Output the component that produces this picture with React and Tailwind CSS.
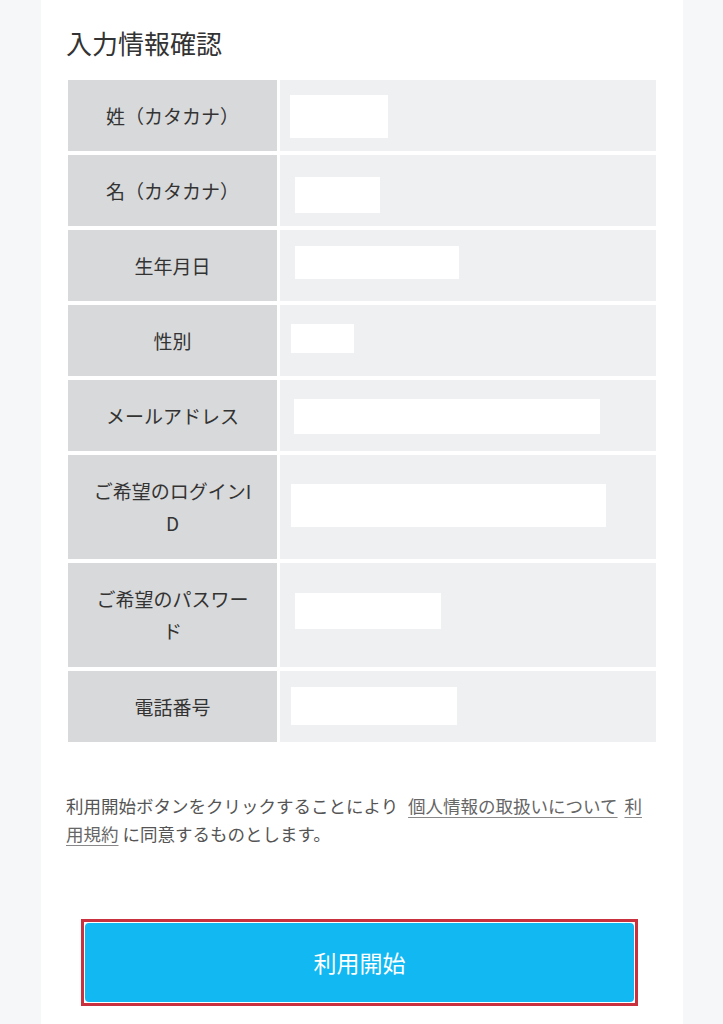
import React from "react";

const rows = [
  { label: "姓（カタカナ）", tall: false, box: "ml-[10px] mt-[15px] w-[98px] h-[43px]" },
  { label: "名（カタカナ）", tall: false, box: "ml-[15px] mt-[22px] w-[85px] h-[36px]" },
  { label: "生年月日", tall: false, box: "ml-[15px] mt-[16px] w-[164px] h-[33px]" },
  { label: "性別", tall: false, box: "ml-[11px] mt-[19px] w-[63px] h-[29px]" },
  { label: "メールアドレス", tall: false, box: "ml-[14px] mt-[19px] w-[306px] h-[35px]" },
  { label: "ご希望のログインID", tall: true, box: "ml-[11px] mt-[29px] w-[315px] h-[43px]" },
  { label: "ご希望のパスワード", tall: true, box: "ml-[15px] mt-[30px] w-[146px] h-[36px]" },
  { label: "電話番号", tall: false, box: "ml-[11px] mt-[16px] w-[166px] h-[38px]" },
];

export default function App() {
  return (
    <div
      className="w-[723px] h-[1024px] overflow-hidden bg-[#f6f7f8] pl-[41px] pr-[40px]"
      style={{ fontFamily: '"Noto Sans CJK JP", "Noto Sans", sans-serif' }}
    >
      <div className="h-full bg-white px-[25px] pt-[23px]">
        <h1 className="text-[26px] leading-[39px] text-[#333333] font-normal">入力情報確認</h1>

        <div className="mt-[18px] mx-[2px] grid grid-cols-[209px_1fr] gap-x-[3px] gap-y-[4px]">
          {rows.map((r, i) => (
            <React.Fragment key={i}>
              <div
                className={
                  (r.tall ? "h-[104px]" : "h-[71px]") +
                  " bg-[#d8d9da] flex items-center justify-center px-[22px] text-center text-[19px] leading-[32px] text-[#333333] break-all"
                }
              >
                {r.label}
              </div>
              <div className={(r.tall ? "h-[104px]" : "h-[71px]") + " bg-[#eff0f1] flex items-start"}>
                <div className={"bg-white " + r.box}></div>
              </div>
            </React.Fragment>
          ))}
        </div>

        <p className="mt-[50px] w-[590px] text-[17.5px] leading-[28px] text-[#555555]">
          利用開始ボタンをクリックすることにより{" "}
          <span className="ml-[6px] underline underline-offset-[4px] decoration-[#888888] text-[#666666]">個人情報の取扱いについて</span>{" "}
          <span className="ml-[3px] underline underline-offset-[4px] decoration-[#888888] text-[#666666]">利用規約</span>{" "}
          に同意するものとします。
        </p>

        <div className="mt-[71px] ml-[15px] w-[557px] h-[87px] border-[3px] border-[#c8313d] p-[1px] bg-white">
          <button className="w-full h-full rounded-[4px] bg-[#12b8f2] text-white text-[23px] leading-none">
            利用開始
          </button>
        </div>
      </div>
    </div>
  );
}
